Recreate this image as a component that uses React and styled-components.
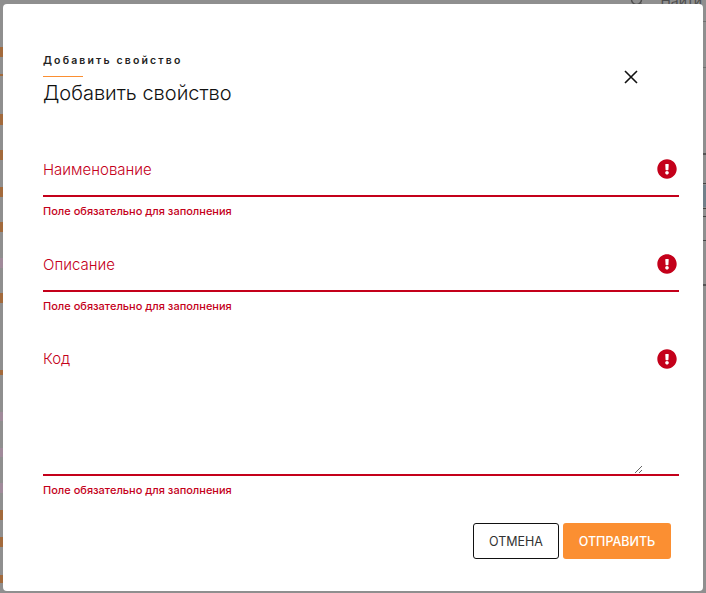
import React from "react";
import styled, { createGlobalStyle } from "styled-components";
import { FaExclamationCircle } from "react-icons/fa";

const RED = "#c4001a";
const ORANGE = "#fb8f32";

const GlobalStyle = createGlobalStyle`
  html, body {
    margin: 0;
    height: 100%;
    overflow: hidden;
    font-family: Inter, "Noto Sans", "Liberation Sans", sans-serif;
  }
`;

const Page = styled.div`
  position: relative;
  width: 706px;
  height: 593px;
  overflow: hidden;
  background: #8f8f8f;
`;

// the page under the dialog, only its edges show
const Behind = styled.div`
  display: flex;
  height: 100%;
`;

const EdgeColumn = styled.div`
  display: flex;
  flex-direction: column;
  width: 3px;
`;

const Strip = styled.div`
  height: ${(p) => p.$h}px;
  margin-top: ${(p) => p.$gap}px;
  background: ${(p) => p.$color};
`;

const BehindSearch = styled.div`
  display: flex;
  align-items: center;
  align-self: flex-start;
  gap: 14px;
  margin: -8px 0 0 auto;
  padding-right: 1px;
  font-size: 14px;
  color: #4d4d4d;
`;

const Overlay = styled.div`
  position: absolute;
  inset: 4px 3px 2px 3px;
`;

const Dialog = styled.form`
  box-sizing: border-box;
  height: 100%;
  padding: 51px 24px 0 40px;
  background: #fff;
  border-radius: 4px;
  display: flex;
  flex-direction: column;
`;

const Header = styled.header`
  display: flex;
  justify-content: space-between;
  align-items: flex-start;
  height: 94px;
`;

const Eyebrow = styled.div`
  font-size: 10.5px;
  line-height: 12px;
  font-weight: 600;
  letter-spacing: 2.15px;
  color: #222;
`;

const Accent = styled.div`
  width: 40px;
  height: 1px;
  margin-top: 9px;
  background: ${ORANGE};
`;

const Title = styled.h2`
  margin: 3px 0 0;
  font-size: 20px;
  line-height: 26px;
  font-weight: 300;
  color: #111;
`;

const CloseButton = styled.button`
  display: flex;
  padding: 0;
  margin: 14px 40px 0 0;
  border: 0;
  background: none;
  cursor: pointer;
`;

const Field = styled.div`
  display: flex;
  align-items: flex-start;
  justify-content: space-between;
  padding-right: 2px;
  border-bottom: 2px solid ${RED};
`;

const Control = styled.input`
  display: block;
  box-sizing: border-box;
  width: 600px;
  height: 46px;
  padding: 0 0 6px;
  border: 0;
  outline: none;
  background: none;
  font: 300 15px/22px Inter, "Noto Sans", sans-serif;
  color: ${RED};
  &::placeholder {
    color: ${RED};
    opacity: 1;
  }
`;

const Area = styled(Control).attrs({ as: "textarea" })`
  height: 135px;
  padding: 9px 0 0;
  resize: vertical;
`;

const AlertIcon = styled(FaExclamationCircle)`
  flex: none;
  margin-top: 10px;
  color: ${RED};
`;

const ErrorText = styled.div`
  box-sizing: border-box;
  height: 47px;
  padding-top: 7px;
  font-size: 11px;
  line-height: 14px;
  font-weight: 500;
  color: ${RED};
`;

const Actions = styled.div`
  display: flex;
  justify-content: flex-end;
  gap: 4px;
  padding-right: 8px;
`;

const Button = styled.button`
  box-sizing: border-box;
  width: ${(p) => (p.$primary ? 108 : 86)}px;
  height: 36px;
  padding: 0;
  border-radius: 3px;
  border: ${(p) => (p.$primary ? "0" : "1px solid #111")};
  background: ${(p) => (p.$primary ? ORANGE : "#fff")};
  color: ${(p) => (p.$primary ? "#fff" : "#333")};
  font: ${(p) => (p.$primary ? 500 : 400)} 12.5px Inter, "Noto Sans", sans-serif;
  cursor: pointer;
`;

const fields = [
  { name: "name", label: "Наименование" },
  { name: "description", label: "Описание" },
  { name: "code", label: "Код", multiline: true },
];

const BROWN = "#a26a3c";
const PINK = "#a08a9a";

const leftStrips = [
  { gap: 47, h: 10, color: BROWN },
  { gap: 17, h: 2, color: BROWN },
  { gap: 38, h: 11, color: BROWN },
  { gap: 25, h: 10, color: BROWN },
  { gap: 27, h: 10, color: BROWN },
  { gap: 25, h: 10, color: BROWN },
  { gap: 26, h: 10, color: PINK },
  { gap: 25, h: 10, color: BROWN },
  { gap: 67, h: 5, color: BROWN },
  { gap: 37, h: 9, color: PINK },
  { gap: 27, h: 9, color: PINK },
  { gap: 26, h: 10, color: PINK },
  { gap: 17, h: 10, color: BROWN },
  { gap: 17, h: 10, color: BROWN },
  { gap: 28, h: 8, color: BROWN },
];

const rightStrips = [
  { gap: 21, h: 1, color: "#6f6f6f" },
  { gap: 45, h: 1, color: "#6f6f6f" },
  { gap: 85, h: 2, color: "#555" },
  { gap: 28, h: 1, color: "#444" },
  { gap: 1, h: 22, color: "#72808a" },
  { gap: 1, h: 1, color: "#444" },
  { gap: 7, h: 1, color: "#444" },
  { gap: 23, h: 1, color: "#444" },
  { gap: 43, h: 2, color: "#555" },
];

function Edge({ strips }) {
  return (
    <EdgeColumn>
      {strips.map((s, i) => (
        <Strip key={i} $gap={s.gap} $h={s.h} $color={s.color} />
      ))}
    </EdgeColumn>
  );
}

export default function App() {
  return (
    <Page>
      <GlobalStyle />
      <Behind>
        <Edge strips={leftStrips} />
        <BehindSearch>
          <svg width="16" height="16" viewBox="0 0 16 16" fill="none" stroke="#4d4d4d" strokeWidth="1.4">
            <circle cx="6.5" cy="6.5" r="5" />
            <path d="M10.5 10.5L15 15" />
          </svg>
          Найти
        </BehindSearch>
        <Edge strips={rightStrips} />
      </Behind>

      <Overlay>
        <Dialog>
          <Header>
            <div>
              <Eyebrow>Добавить свойство</Eyebrow>
              <Accent />
              <Title>Добавить свойство</Title>
            </div>
            <CloseButton type="button" aria-label="Закрыть">
              <svg width="16" height="16" viewBox="0 0 16 16" fill="none" stroke="#111" strokeWidth="1.6">
                <path d="M2 2L14 14M14 2L2 14" />
              </svg>
            </CloseButton>
          </Header>
          {fields.map((field) => (
            <div key={field.name}>
              <Field>
                {field.multiline ? (
                  <Area name={field.name} placeholder={field.label} />
                ) : (
                  <Control name={field.name} placeholder={field.label} />
                )}
                <AlertIcon size={20} />
              </Field>
              <ErrorText>Поле обязательно для заполнения</ErrorText>
            </div>
          ))}
          <Actions>
            <Button type="button">ОТМЕНА</Button>
            <Button type="button" $primary>
              ОТПРАВИТЬ
            </Button>
          </Actions>
        </Dialog>
      </Overlay>
    </Page>
  );
}
